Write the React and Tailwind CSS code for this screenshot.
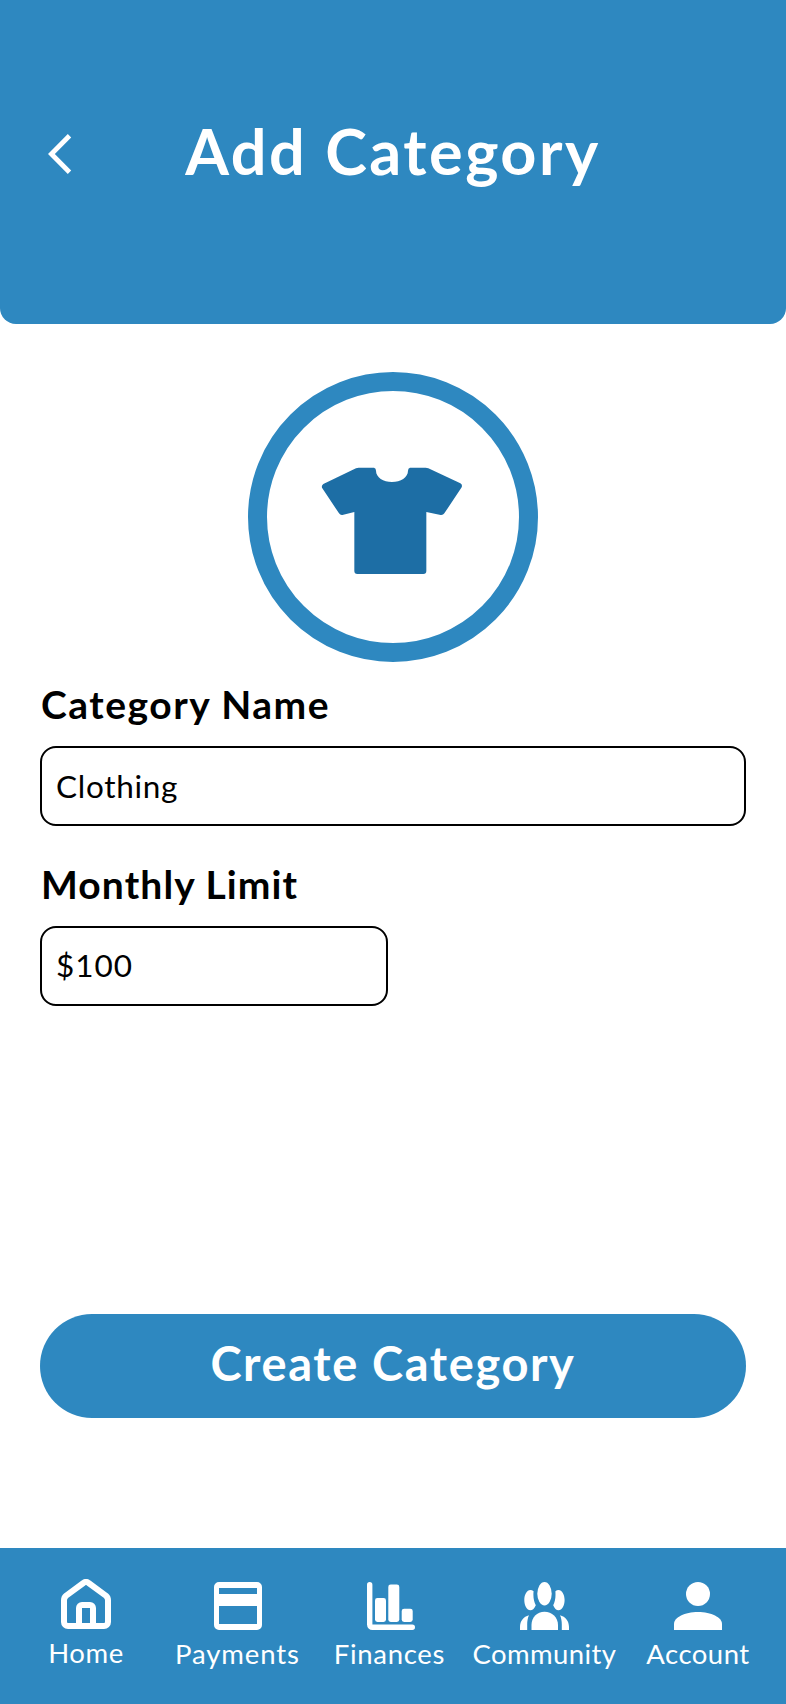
import React from 'react';

// Bottom navigation icons
const HomeIcon = () => (
  <svg width="50" height="50" viewBox="0 0 50 50" fill="none" stroke="currentColor" strokeWidth="6" strokeLinejoin="round">
    <path d="M3 21.2c0-1.8.8-3.4 2.2-4.6L22.4 4c1.5-1.2 3.7-1.2 5.2 0l17.2 12.6c1.4 1.2 2.2 2.8 2.2 4.6V43c0 2.2-1.8 4-4 4H7c-2.2 0-4-1.8-4-4z" />
    <path d="M18 47V29c0-1.7 1.3-3 3-3h8c1.7 0 3 1.3 3 3v18" />
  </svg>
);

const PaymentsIcon = () => (
  <svg width="48" height="48" viewBox="0 0 48 48" fill="currentColor">
    <path fillRule="evenodd" d="M5 0h38a5 5 0 0 1 5 5v38a5 5 0 0 1-5 5H5a5 5 0 0 1-5-5V5a5 5 0 0 1 5-5zM5 6v6h38V6zM5 24v18h38V24z" />
  </svg>
);

const FinancesIcon = () => (
  <svg width="48" height="48" viewBox="0 0 48 48" fill="currentColor">
    <path d="M2.7 0a2.7 2.7 0 0 1 2.7 2.7v39.9h39.9a2.7 2.7 0 0 1 0 5.4H5.4A5.4 5.4 0 0 1 0 42.6V2.7A2.7 2.7 0 0 1 2.7 0z" />
    <rect x="8" y="16" width="11" height="24" rx="2.4" />
    <rect x="21.3" y="2.6" width="11" height="37.4" rx="2.4" />
    <rect x="34.7" y="26.7" width="11" height="13.3" rx="2.4" />
  </svg>
);

const CommunityIcon = () => (
  <svg width="49" height="48" viewBox="0 0 49 48" fill="currentColor">
    <ellipse cx="24.5" cy="11.7" rx="7.2" ry="11.7" />
    <path d="M11.5 48V43C11.5 35.5 17 29.8 24.5 29.8S38 35.5 38 43v5z" />
    <path d="M13.6 9.2C12.7 8.5 11.4 8.1 10.3 8.1 7 8.1 4.3 12.6 4.3 18.1S7 28.3 10.3 28.3c2.3 0 4.3-2 5.5-5-1.5-3-2.4-6.5-2.4-10.4 0-1.3 0-2.6.2-3.7z" />
    <path d="M35.4 9.2c.9-.7 2-1.1 3.2-1.1 3.3 0 6 4.5 6 10s-2.7 10.2-6 10.2c-2.3 0-4.2-2-5.4-5 1.5-3 2.3-6.5 2.3-10.4 0-1.3 0-2.6-.1-3.7z" />
    <path d="M9 33.2C3.5 34.6 0 39 0 45v3h7.2v-5.5c0-3.4.5-6.6 1.8-9.3z" />
    <path d="M40 33.2c5.500 1.400 9 5.800 9 11.800v3h-7.200v-5.500c0-3.400-.5-6.600-1.800-9.300z" />
  </svg>
);

const AccountIcon = () => (
  <svg width="48" height="48" viewBox="0 0 48 48" fill="currentColor">
    <circle cx="24" cy="12" r="12" />
    <path d="M24 30C10.7 30 0 35.4 0 42v6h48v-6c0-6.6-10.7-12-24-12z" />
  </svg>
);

const ShirtIcon = () => (
  <svg className="w-full h-full" viewBox="81 93 756 756" fill="#1d6ea5">
    <path d="M356 323H402Q408 324 408 332C408 352 430 366 456 366S504 352 504 332Q504 324 510 323H557Q561 323 565 325L661 370Q668 374 665 382L613 460Q609 466 602 465L559 456V633Q559 642 550 642H352Q343 642 343 633V456L307 465Q301 466 297 460L246 383Q244 376 250 372L348 325Q352 323 356 323Z" />
  </svg>
);

const navItems = [
  { label: 'Home', Icon: HomeIcon, item: 'w-[152px] pt-[31px]', text: 'tracking-[0.6px]' },
  { label: 'Payments', Icon: PaymentsIcon, item: 'w-[151px] pt-[34px]', text: 'tracking-[0.9px]' },
  { label: 'Finances', Icon: FinancesIcon, item: 'w-[156px] pt-[34px]', text: 'mr-[3px] tracking-[0.7px]' },
  { label: 'Community', Icon: CommunityIcon, item: 'w-[151px] pt-[34px]', text: 'tracking-[0.4px]' },
  { label: 'Account', Icon: AccountIcon, item: 'w-[156px] pt-[34px]', text: 'tracking-[0.5px]' },
];

export default function App() {
  return (
    <div className="w-[786px] h-[1704px] flex flex-col bg-white text-black font-['Lato',sans-serif]">
      {/* Header */}
      <header className="h-[324px] shrink-0 bg-[#2e88c0] rounded-b-2xl text-white flex items-start">
        <button className="w-[80px] pl-[48px] pt-[134px]" aria-label="Back">
          <svg width="24" height="40" viewBox="0 0 24 40" fill="none" stroke="currentColor" strokeWidth="4.8">
            <path d="M21.5 1.8L3.4 20l18.1 18.2" />
          </svg>
        </button>
        <h1 className="flex-1 pr-[80px] pt-[111px] text-center text-[63px] leading-[80px] font-bold tracking-[2.5px]">Add Category</h1>
      </header>

      {/* Category form */}
      <main className="flex-1 flex flex-col px-10">
        <div className="w-[290px] h-[290px] mt-12 self-center shrink-0 rounded-full border-[19px] border-[#2e88c0]">
          <ShirtIcon />
        </div>

        <label className="mt-[17px] h-[67px] pl-px text-[39px] leading-[50px] font-bold tracking-[1.5px] whitespace-nowrap">Category Name</label>
        <div className="h-20 border-2 border-black rounded-2xl pl-3.5 pt-0.5 flex items-center text-[31.5px] tracking-[0.7px]">
          <span>Clothing</span>
        </div>

        <label className="mt-[33px] h-[67px] pl-px text-[39px] leading-[50px] font-bold tracking-[1.1px] whitespace-nowrap">Monthly Limit</label>
        <div className="w-[348px] h-20 border-2 border-black rounded-2xl pl-3.5 flex items-center text-[31.5px] tracking-[1px]">
          <span>$100</span>
        </div>

        <button className="mt-[308px] h-[104px] pb-[5px] rounded-full bg-[#2e88c0] text-white text-[47px] font-bold tracking-[1.6px]">
          Create Category
        </button>
      </main>

      {/* Bottom navigation */}
      <nav className="h-[156px] shrink-0 pl-[10px] bg-[#2e88c0] text-white flex">
        {navItems.map(({ label, Icon, item, text }) => (
          <div key={label} className={`flex flex-col items-center shrink-0 ${item}`}>
            <Icon />
            <span className={`mt-[7px] text-[27.5px] leading-[34px] ${text}`}>{label}</span>
          </div>
        ))}
      </nav>
    </div>
  );
}
